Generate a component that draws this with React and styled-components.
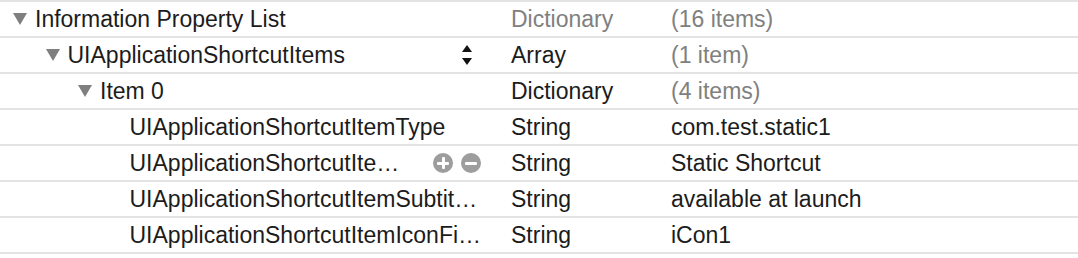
import React from 'react';
import styled, { createGlobalStyle } from 'styled-components';

const GlobalStyle = createGlobalStyle`
  html, body {
    margin: 0;
    padding: 0;
    background: #ffffff;
  }
  body {
    font-family: "Liberation Sans", Arial, sans-serif;
    -webkit-font-smoothing: antialiased;
  }
`;

const Table = styled.div`
  width: 1078px;
  border-top: 2px solid #e3e3e3;
`;

const Row = styled.div`
  display: flex;
  align-items: center;
  height: 34px;
  border-bottom: 2px solid #e3e3e3;
  font-size: 23px;
  color: #1c1c1c;
`;

const NameCell = styled.div`
  display: flex;
  align-items: center;
  width: 511px;
  box-sizing: border-box;
  padding-left: ${(p) => p.$indent}px;
  padding-right: ${(p) => p.$padRight || 0}px;
`;

const Disclosure = styled.span`
  width: 0;
  height: 0;
  border-left: 7.5px solid transparent;
  border-right: 7.5px solid transparent;
  border-top: 12px solid #7f7f7f;
  margin-right: 8px;
  flex-shrink: 0;
`;

const Spacer = styled.span`
  width: 21px;
  flex-shrink: 0;
`;

const Name = styled.span`
  flex: 1;
  white-space: nowrap;
  overflow: hidden;
`;

const TypeCell = styled.div`
  width: 160px;
  color: ${(p) => (p.$muted ? '#808080' : '#1c1c1c')};
`;

const ValueCell = styled.div`
  flex: 1;
  color: ${(p) => (p.$muted ? '#808080' : '#1c1c1c')};
`;

const Stepper = styled.span`
  display: flex;
  flex-direction: column;
  align-items: center;
  gap: 6px;
  width: 11px;
`;

const Arrow = styled.span`
  width: 0;
  height: 0;
  border-left: 5px solid transparent;
  border-right: 5px solid transparent;
  ${(p) => (p.$up ? 'border-bottom: 7px solid #111;' : 'border-top: 7px solid #111;')}
`;

const Buttons = styled.span`
  display: flex;
  gap: 8px;
`;

const RoundButton = styled.span`
  position: relative;
  width: 20px;
  height: 20px;
  border-radius: 50%;
  background: #9d9d9d;
  &::before,
  &::after {
    content: '';
    position: absolute;
    background: #fff;
    left: 4px;
    top: 8.5px;
    width: 12px;
    height: 3px;
    border-radius: 1px;
  }
  &::after {
    display: ${(p) => (p.$plus ? 'block' : 'none')};
    left: 8.5px;
    top: 4px;
    width: 3px;
    height: 12px;
  }
`;

const rows = [
  { level: 0, open: true, name: 'Information Property List', type: 'Dictionary', value: '(16 items)', mutedType: true, mutedValue: true },
  { level: 1, open: true, name: 'UIApplicationShortcutItems', type: 'Array', value: '(1 item)', mutedValue: true, stepper: true },
  { level: 2, open: true, name: 'Item 0', type: 'Dictionary', value: '(4 items)', mutedValue: true },
  { level: 3, name: 'UIApplicationShortcutItemType', type: 'String', value: 'com.test.static1' },
  { level: 3, name: 'UIApplicationShortcutIte…', type: 'String', value: 'Static Shortcut', buttons: true },
  { level: 3, name: 'UIApplicationShortcutItemSubtit…', type: 'String', value: 'available at launch' },
  { level: 3, name: 'UIApplicationShortcutItemIconFi…', type: 'String', value: 'iCon1' },
];

function App() {
  return (
    <>
      <GlobalStyle />
      <Table>
        {rows.map((r, i) => (
          <Row key={i}>
            <NameCell $indent={13 + r.level * 32.5 - (r.open ? 0 : 2)} $padRight={r.stepper ? 39 : r.buttons ? 30 : 0}>
              {r.open ? <Disclosure /> : <Spacer />}
              <Name>{r.name}</Name>
              {r.stepper && (
                <Stepper>
                  <Arrow $up />
                  <Arrow />
                </Stepper>
              )}
              {r.buttons && (
                <Buttons>
                  <RoundButton $plus />
                  <RoundButton />
                </Buttons>
              )}
            </NameCell>
            <TypeCell $muted={r.mutedType}>{r.type}</TypeCell>
            <ValueCell $muted={r.mutedValue}>{r.value}</ValueCell>
          </Row>
        ))}
      </Table>
    </>
  );
}

export default App;
